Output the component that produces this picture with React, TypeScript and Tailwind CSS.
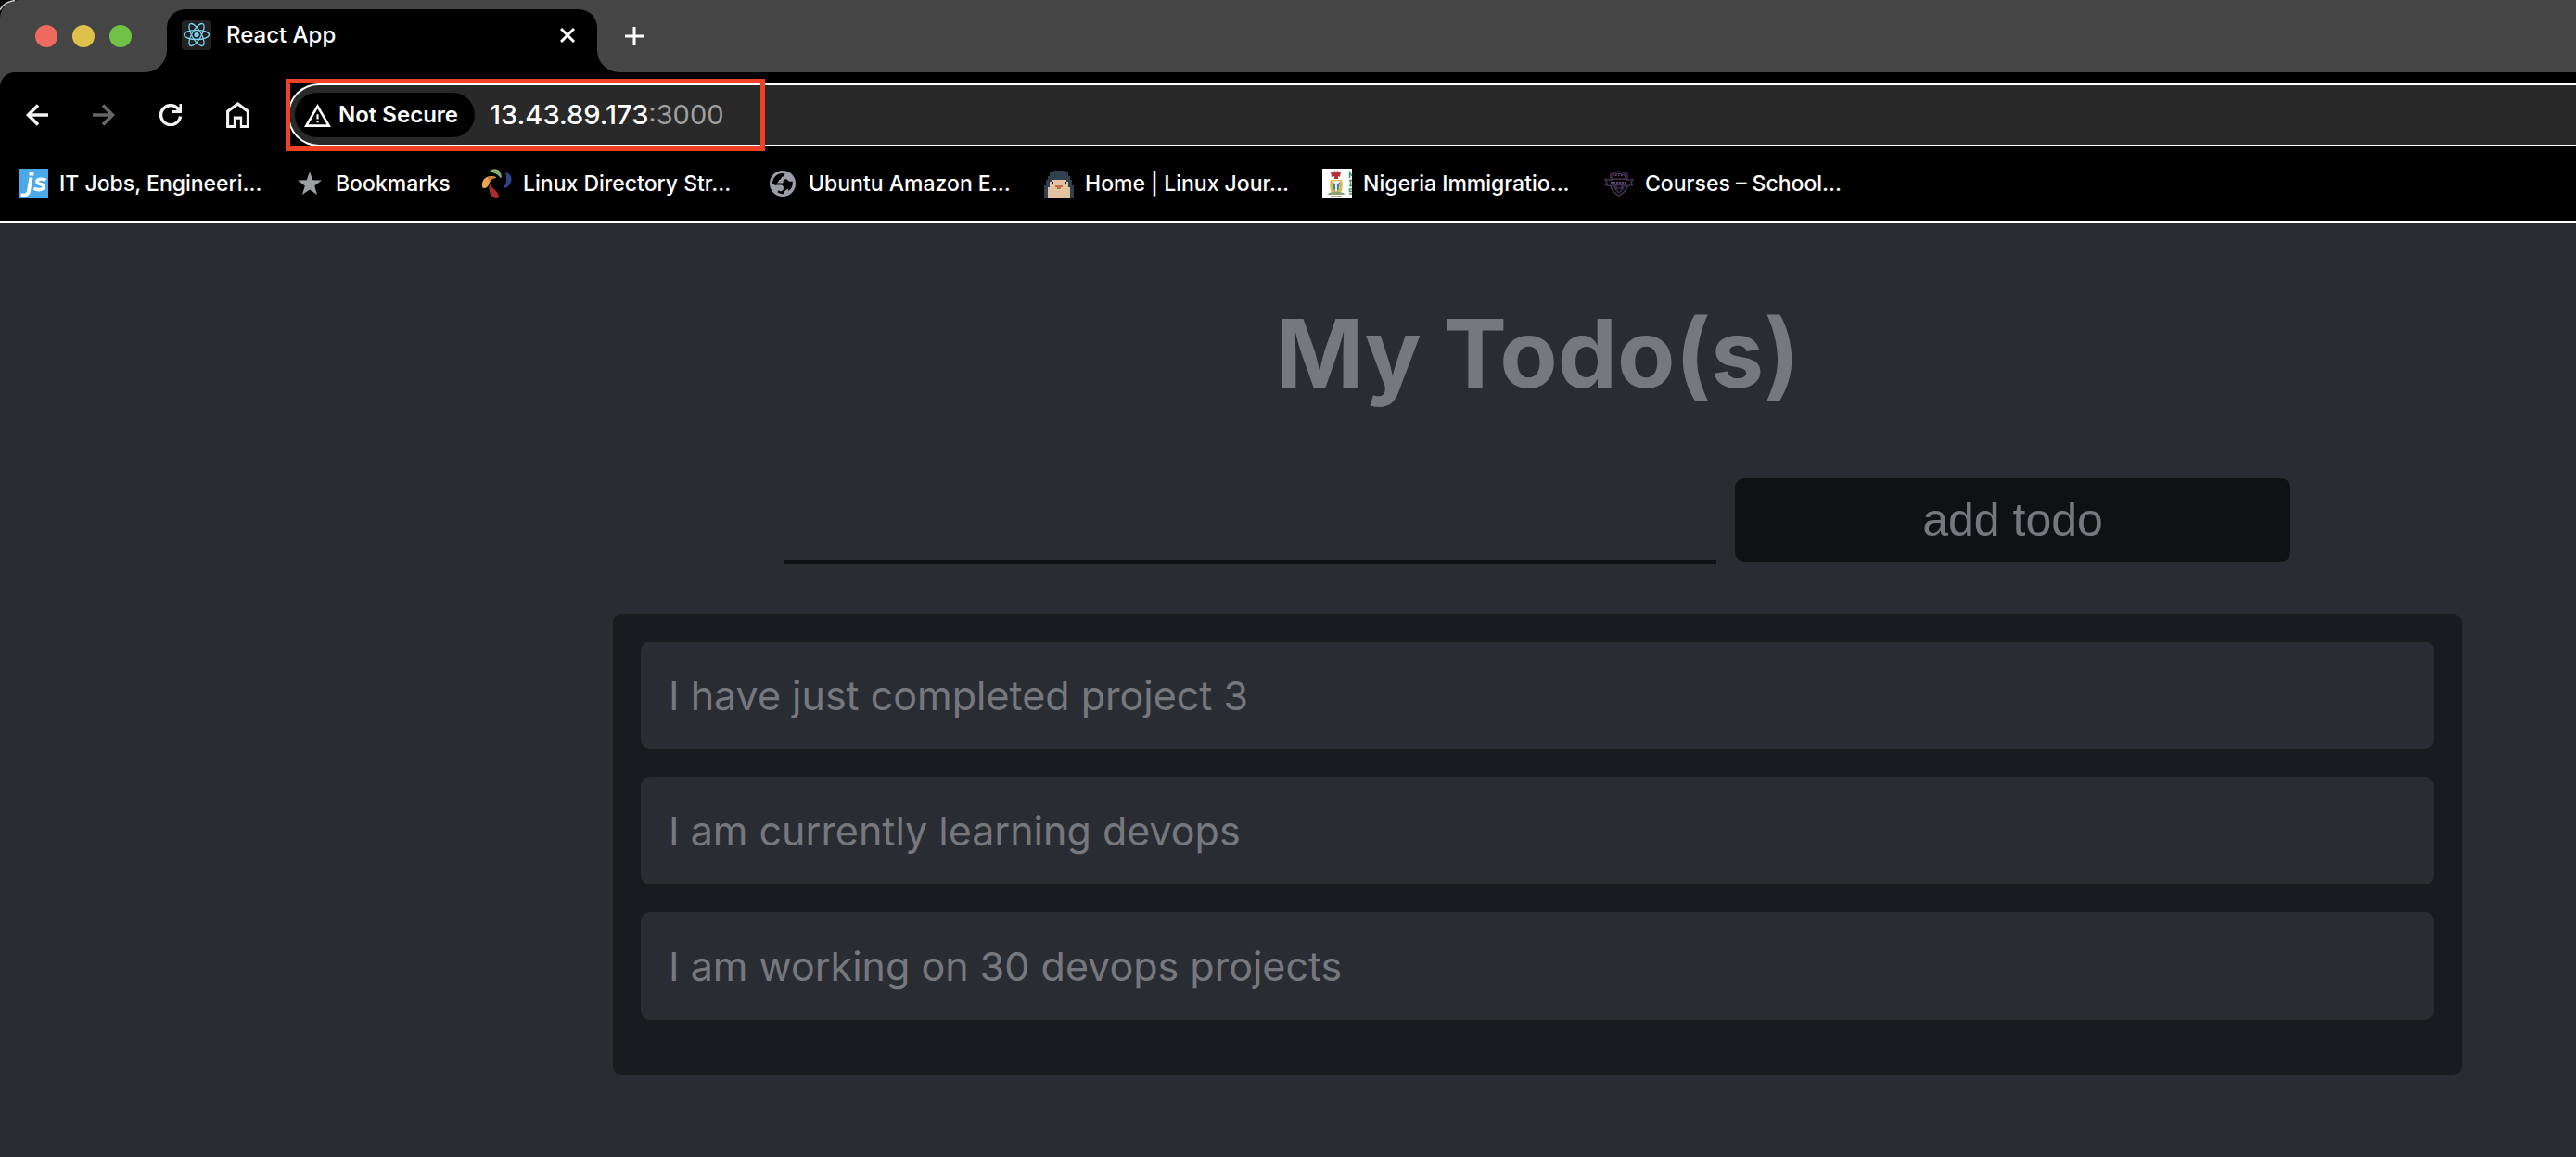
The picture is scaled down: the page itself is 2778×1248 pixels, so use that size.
import React from "react";

const ReactLogo = () => (
  <svg viewBox="0 0 32 32" className="size-8 shrink-0" aria-hidden="true">
    <rect width="32" height="32" rx="4" fill="#222222" />
    <g fill="none" stroke="#7bd3f3" strokeWidth="1.3">
      <ellipse cx="16" cy="15.5" rx="13.5" ry="5" />
      <ellipse cx="16" cy="15.5" rx="13.5" ry="5" transform="rotate(60 16 15.5)" />
      <ellipse cx="16" cy="15.5" rx="13.5" ry="5" transform="rotate(120 16 15.5)" />
    </g>
    <circle cx="16" cy="15.5" r="2.6" fill="#7bd3f3" />
  </svg>
);

const JsIcon = () => (
  <svg viewBox="0 0 32 32" className="size-8" aria-hidden="true">
    <rect width="32" height="32" fill="#4ba9ea" />
    <g fill="none" stroke="#ffffff" strokeWidth="4">
      <path d="M13.5 9.5 11 24q-.8 4.5-5 4.5H2.5" />
      <path d="M29.5 12.5q-2.5-1.5-6-1.2-4 .4-3.6 2.9.3 1.7 3.8 2.3 3.8.8 3.3 3.4-.6 2.7-5 2.7-3 0-5.5-1.5" strokeWidth="3.6" />
    </g>
    <rect x="11.5" y="4" width="5" height="3.5" fill="#ffffff" />
  </svg>
);

const StarIcon = () => (
  <svg viewBox="0 0 32 32" className="size-8" aria-hidden="true">
    <path fill="#9aa0a6" d="M16 3l3.2 9.2 9.8.2-7.8 6 2.9 9.6L16 22.4 7.9 28l2.9-9.6-7.8-6 9.8-.2z" />
  </svg>
);

const SwirlIcon = () => (
  <svg viewBox="0 0 32 32" className="size-8" aria-hidden="true">
    <path fill="#86b06a" d="M8 3C11-1 17 0 19 3q2 3 2 7-1 0-2-1-3-4-11-6z" />
    <path fill="#e9a84f" d="M0 20C-1 13 3 8 10 8q5 0 5 2-5 0-7 5-2 6-6 6z" />
    <path fill="#d3793a" d="M6 9q5-2 9 1-5 0-7 4-2-3-2-5z" />
    <path fill="#a92b2b" d="M8 16c1 5 10 7 10 15-2 2-6 1-8-2-3-4-3-9-2-13z" />
    <path fill="#2f4486" d="M25 4c7 1 9 9 3 15q-2 2-5 2 5-7 2-17z" />
  </svg>
);

const GlobeIcon = () => (
  <svg viewBox="0 0 32 32" className="size-8" aria-hidden="true">
    <circle cx="16" cy="16" r="14" fill="#9aa0a6" />
    <path fill="#000000" d="M5 16C5 9.5 10 5 16 5c1 0 2 .2 2.5.5-.3 2-1.5 3.2-3.5 3.5-.5 2-1.5 3-3.2 3.3.2 1.7-.8 2.7-2.3 2.9 2.5.3 4.5.3 6.5.3 2 0 3 1.3 3 3.2 2 .3 2.5 1.5 2 3.3-1 1.5-3.5 1.5-4 5.2-2 0-4.5-.6-6.5-2 .5-2 2-2.5 4-2.7.5-2-.5-3-2-3.5-2.5-.6-5-1-7.5-3z" />
    <path fill="#000000" d="M17 12c2-1.5 4-1 5 1 1.5 1 3 1 4.8.5.5 4.5-1 8-4.3 10.5-.2-2-1.5-3-3.5-3 .6-2.5-.5-3.8-3-4z" />
    <path fill="#9aa0a6" d="M9 17.5h5c2.5 0 3 2 3 3.5 0 2-1 3-3 3.3-3-.5-4-3.3-5-6.8z" />
  </svg>
);

const PenguinIcon = () => (
  <svg viewBox="0 0 32 32" className="size-8" shapeRendering="crispEdges" aria-hidden="true">
    <path fill="#31404f" d="M10 2h12v2h4v4h2v4h2v6h2v14H0V18h2v-6h2V8h2V4h4z" />
    <path fill="#e3c2a2" d="M8 12h16v2h2v6h2v12H4V20h2v-6h2z" />
    <path fill="#14181d" d="M8 14h2v2H8zm14 0h2v2h-2z" />
    <path fill="#c2703f" d="M12 18h8v2h-2v2h-4v-2h-2z" />
  </svg>
);

const CrestIcon = () => (
  <svg viewBox="0 0 32 32" className="size-8" aria-hidden="true">
    <rect width="32" height="32" fill="#ffffff" />
    <path fill="#b23038" d="M9 3l3 1 1.5-2L15 4l1.5-2L18 4l2-1-1 6-2-1v3h-4V8l-3 1z" />
    <path fill="#d8ba45" d="M9 12h12l1 5-1 7-6 4-6-4-1-7z" />
    <path fill="#e8edf0" d="M11 13h8v8l-4 4-4-4z" />
    <path fill="#4b7da0" d="M11 14l3 3v7l-2-2zm8 0l-3 3v7l2-2z" />
    <path fill="#8aa36e" d="M7 26q8-3 16 0l1 2H6z" />
    <path fill="#a9a9a0" d="M9 29h12v1H9z" />
    <path fill="none" stroke="#3c9a5f" strokeWidth="1.5" d="M29.5 10V4l2.5 4M29 12.5h3M30.5 13v5M29 18.5h3M32 22h-2.5v2.5H32M29 27h3" />
  </svg>
);

const ShieldIcon = () => (
  <svg viewBox="0 0 32 32" className="size-8" aria-hidden="true">
    <g fill="none" stroke="#423150" strokeWidth="1.5">
      <path d="M7 11V6q9-5.5 18 0v5M9 11V7.5q7-4 14 0V11" />
      <path d="M1 11.5l5 .5q10-2 20 0l5-.5-2 3 1.5 3-4.5 1q-10-2-20 0l-4.5-1L3 14.5z" />
      <path d="M7 19q1 5 9 10.5Q24 24 25 19M10.5 18.5Q12 23 16 26q4-3 5.5-7.5M13 18v3h6v-3" />
    </g>
    <path stroke="#6b5280" strokeWidth="1.8" strokeDasharray="2 1" d="M7 14.8h18" />
    <path stroke="#6b5280" strokeWidth="1.3" strokeDasharray="1.5 1.5" d="M12 7.5h9" />
  </svg>
);

const bookmarks = [
  { label: "IT Jobs, Engineeri...", icon: <JsIcon />, width: "w-[298px]" },
  { label: "Bookmarks", icon: <StarIcon />, width: "w-[202px]" },
  { label: "Linux Directory Str...", icon: <SwirlIcon />, width: "w-[308px]" },
  { label: "Ubuntu Amazon E...", icon: <GlobeIcon />, width: "w-[298px]" },
  { label: "Home | Linux Jour...", icon: <PenguinIcon />, width: "w-[300px]" },
  { label: "Nigeria Immigratio...", icon: <CrestIcon />, width: "w-[304px]" },
  { label: "Courses – School...", icon: <ShieldIcon />, width: "w-[298px]" },
];

const todos = [
  "I have just completed project 3",
  "I am currently learning devops",
  "I am working on 30 devops projects",
];

function TabStrip() {
  return (
    <div className="relative bg-black">
      <div className="flex h-[78px] items-end rounded-tl-[20px] bg-[#454545]">
        <div className="flex h-full w-[156px] items-center gap-4 pl-[38px]">
          <button aria-label="Close window" className="size-6 rounded-full bg-[#ee695e]" />
          <button aria-label="Minimise window" className="size-6 rounded-full bg-[#e0c04c]" />
          <button aria-label="Zoom window" className="size-6 rounded-full bg-[#72c147]" />
        </div>
        <div className="size-6 bg-black">
          <div className="size-6 rounded-br-[24px] bg-[#454545]" />
        </div>
        <div className="flex h-[68px] w-[464px] items-center rounded-t-[20px] bg-black pb-3 pl-4 pr-6">
          <ReactLogo />
          <span className="ml-4 grow text-2xl font-medium text-white">React App</span>
          <button aria-label="Close tab" className="text-white">
            <svg viewBox="0 0 16 16" className="size-4" stroke="currentColor" strokeWidth="3">
              <path d="M1 1l14 14M15 1L1 15" />
            </svg>
          </button>
        </div>
        <div className="size-6 bg-black">
          <div className="size-6 rounded-bl-[24px] bg-[#454545]" />
        </div>
        <button aria-label="New tab" className="flex h-full items-center pl-1.5 text-white">
          <svg viewBox="0 0 20 20" className="size-5" stroke="currentColor" strokeWidth="3">
            <path d="M10 0v20M0 10h20" />
          </svg>
        </button>
      </div>
      <svg viewBox="0 0 20 20" className="absolute left-0 top-0 size-5" fill="none" stroke="#c4c4c4" strokeWidth="1.5" aria-hidden="true">
        <path d="M0 11Q4 2 16 .5" />
      </svg>
    </div>
  );
}

function Toolbar() {
  return (
    <div className="bg-[#454545]">
      <div className="relative flex items-center rounded-tl-[16px] bg-black pt-3">
        <div className="flex w-[310px] items-center pl-7">
          <button aria-label="Back" className="text-[#f1f3f4]">
            <svg viewBox="0 0 24 24" className="size-6" fill="none" stroke="currentColor" strokeWidth="3.6">
              <path d="M24 12H3M13 1.5L2.5 12 13 22.5" />
            </svg>
          </button>
          <button aria-label="Forward" className="ml-12 text-[#666666]">
            <svg viewBox="0 0 24 24" className="size-6" fill="none" stroke="currentColor" strokeWidth="3.6">
              <path d="M0 12h21M11 1.5L21.5 12 11 22.5" />
            </svg>
          </button>
          <button aria-label="Reload" className="ml-12 text-[#f1f3f4]">
            <svg viewBox="0 0 24 24" className="size-6" fill="none" stroke="currentColor" strokeWidth="3.4">
              <path d="M22.5 13.5A10.5 10.5 0 1 1 19.5 4.7l2 2.3" />
              <path d="M23 0v8.5H14" strokeWidth="3" />
              <path d="M17 8l5-5v5z" fill="currentColor" stroke="none" />
            </svg>
          </button>
          <button aria-label="Home" className="ml-12 text-[#f1f3f4]">
            <svg viewBox="4 3 16 18" className="h-7 w-[25px]" fill="currentColor">
              <path d="M6 19h3v-6h6v6h3v-9l-6-4.5L6 10v9zm-2 2V9l8-6 8 6v12h-6.5v-6h-3v6H4z" />
            </svg>
          </button>
        </div>
        <div className="flex h-[68px] grow items-center rounded-l-full border-y-2 border-l-2 border-white bg-[#292929]">
          <button className="ml-1.5 flex h-12 w-[194px] items-center gap-2 rounded-full bg-black pl-2.5 text-2xl font-semibold text-white">
            <svg viewBox="1 2 22 19" className="h-[25px] w-[29px] shrink-0" fill="currentColor" aria-hidden="true">
              <path d="M1 21L12 2l11 19H1zm3.45-2h15.1L12 6 4.45 19zM11.2 10.5h1.6v4h-1.6zM11.2 15.7h1.6v1.6h-1.6z" />
            </svg>
            <span className="whitespace-nowrap">Not Secure</span>
          </button>
          <div className="ml-4 whitespace-nowrap text-[29px] text-white">
            <span className="font-medium">13.43.89.173</span>
            <span className="text-[#9f9f9f]">:3000</span>
          </div>
        </div>
        <div className="absolute left-[308px] top-[7px] h-[78px] w-[517px] border-[5px] border-[#ed4226]" />
      </div>
    </div>
  );
}

function BookmarksBar() {
  return (
    <nav className="flex h-[82px] items-center border-b-2 border-white bg-black pl-5">
      {bookmarks.map((b) => (
        <a key={b.label} href="#" className={`flex items-center gap-3 whitespace-nowrap text-[23px] font-medium text-white ${b.width}`}>
          {b.icon}
          {b.label}
        </a>
      ))}
    </nav>
  );
}

export default function App() {
  return (
    <div className="flex min-h-screen flex-col bg-[#2a2c34] font-['Inter',sans-serif]">
      <TabStrip />
      <Toolbar />
      <BookmarksBar />
      <main className="pl-[661px] pr-[123px] text-[#77787d]">
        <h1 className="pt-[76px] text-center text-[102px] font-bold leading-[130px]">My Todo(s)</h1>
        <form className="mt-[70px] flex gap-5 px-[185px]" onSubmit={(e) => e.preventDefault()}>
          <input
            type="text"
            aria-label="New todo"
            className="h-[92px] min-w-0 grow border-b-4 border-[#101113] bg-transparent text-5xl outline-none"
          />
          <button className="h-[90px] w-[599px] rounded-[10px] bg-[#101113] font-['Liberation_Sans',sans-serif] text-[50px]">
            add todo
          </button>
        </form>
        <ul className="mt-[54px] flex flex-col gap-[30px] rounded-[10px] bg-[#1a1b1f] px-[30px] pb-[60px] pt-[30px]">
          {todos.map((t) => (
            <li key={t} className="flex h-[116px] items-center rounded-[10px] bg-[#2a2c34] px-[30px] text-[43px]">
              {t}
            </li>
          ))}
        </ul>
      </main>
    </div>
  );
}
